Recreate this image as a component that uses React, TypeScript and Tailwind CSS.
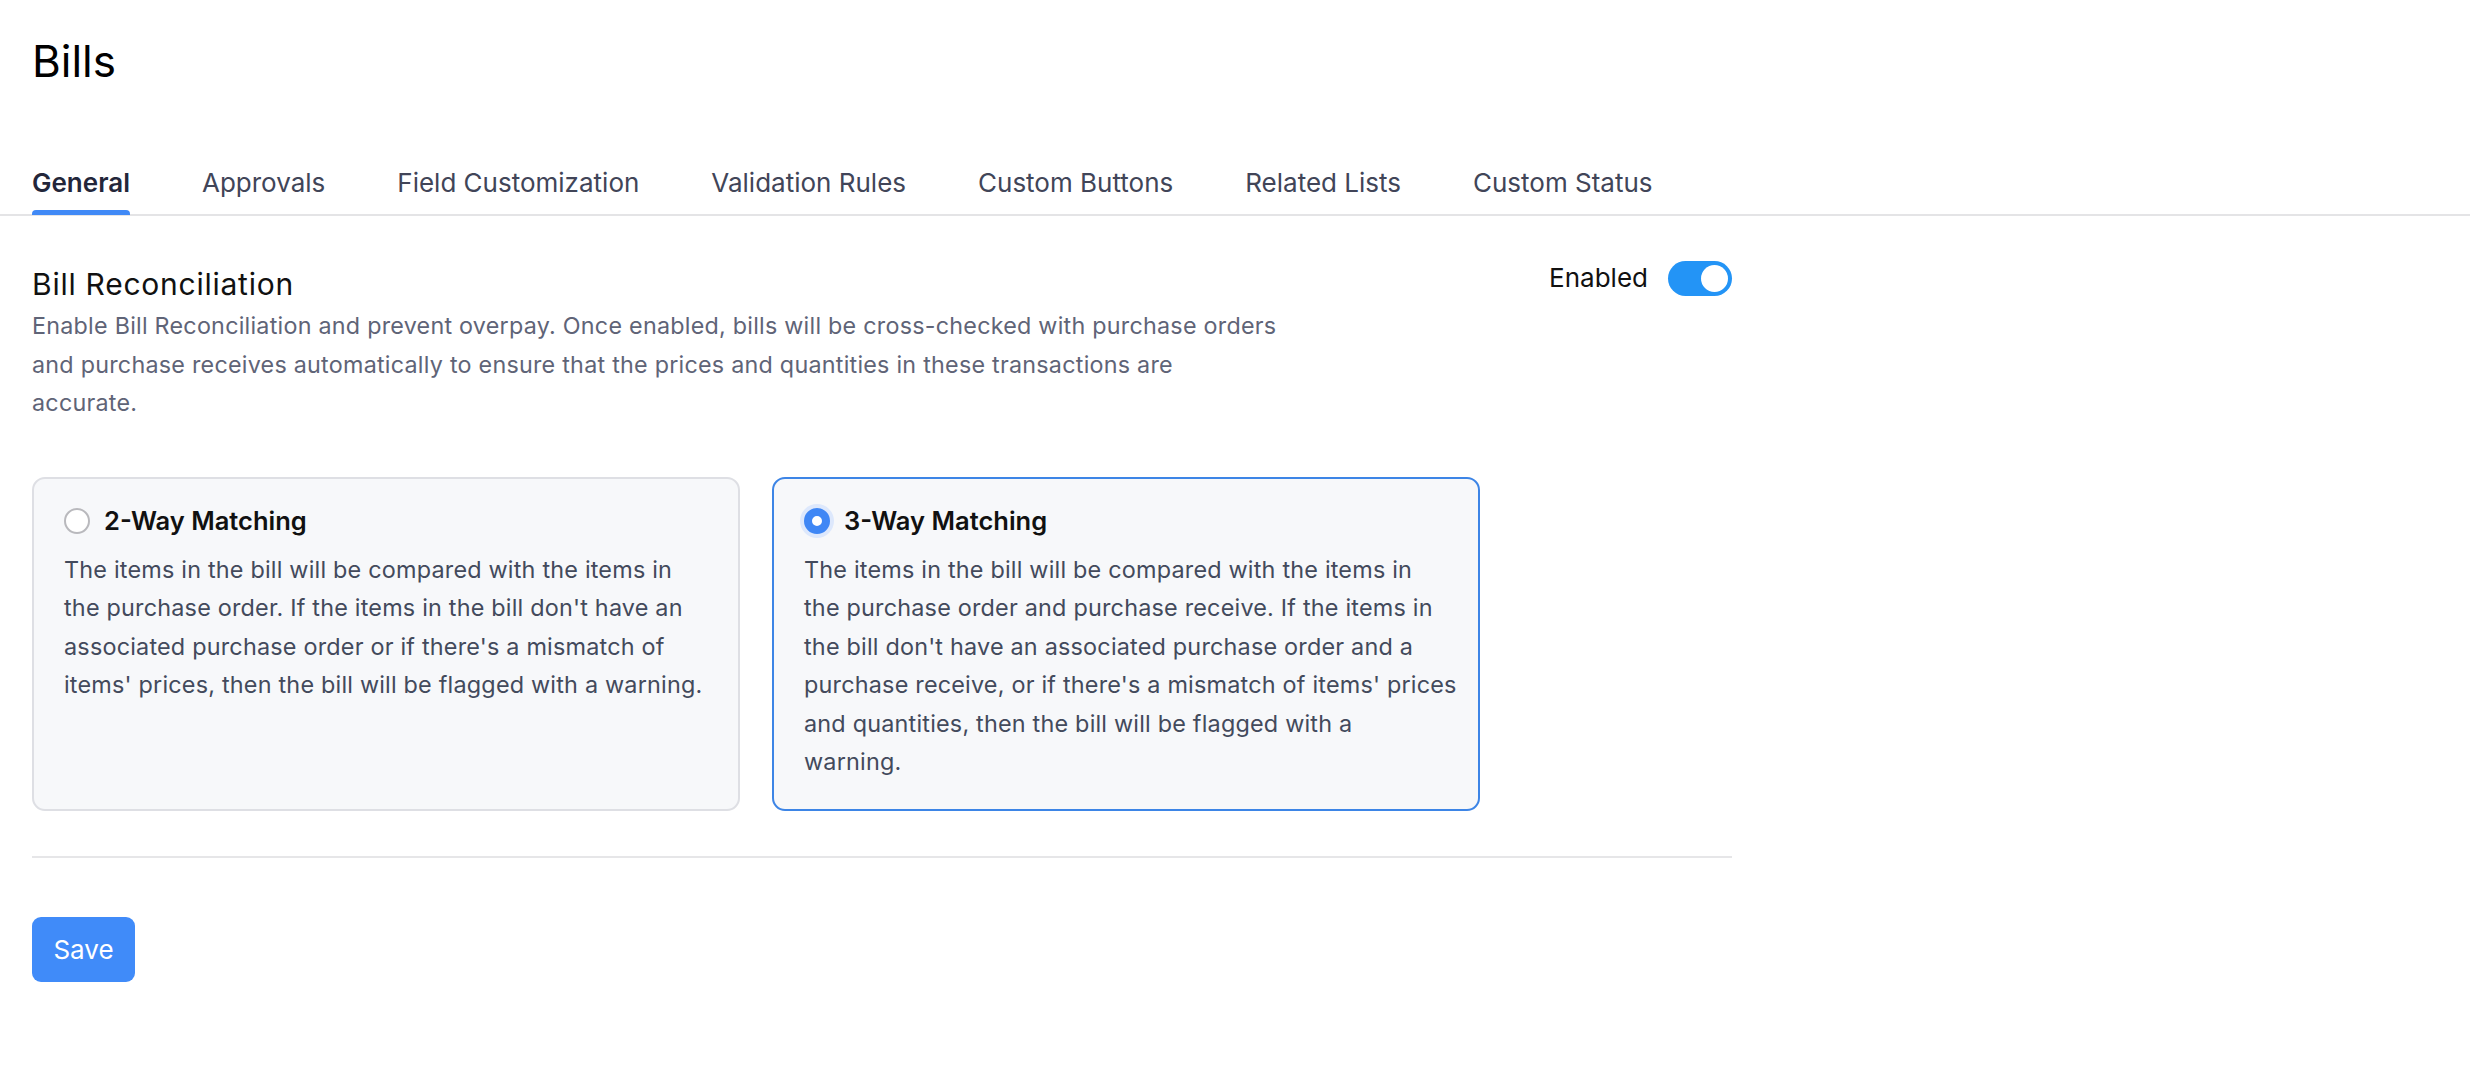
const tabs = [
  "General",
  "Approvals",
  "Field Customization",
  "Validation Rules",
  "Custom Buttons",
  "Related Lists",
  "Custom Status",
];

function Radio({ checked }: { checked: boolean }) {
  if (checked) {
    return (
      <span className="shrink-0 w-[26px] h-[26px] rounded-full border-[8px] border-[#3f87f5] bg-white ring-[4px] ring-[#dde8fc]" />
    );
  }
  return <span className="shrink-0 w-[26px] h-[26px] rounded-full border-2 border-[#b9b9bd] bg-white" />;
}

function MatchCard({ title, lines, checked }: { title: string; lines: string[]; checked: boolean }) {
  return (
    <div
      className={
        checked
          ? "w-[708px] rounded-[13px] border-2 border-[#3d85e6] bg-[#f7f8fa] pl-[30px] pr-[16px] pt-[24px] pb-[27px]"
          : "w-[708px] rounded-[13px] border-2 border-[#dedfe4] bg-[#f7f8fa] pl-[30px] pr-[16px] pt-[24px] pb-[27px]"
      }
    >
      <div className="flex items-center gap-[14px]">
        <Radio checked={checked} />
        <span className="text-[25.5px] leading-[36px] font-semibold text-[#111]">{title}</span>
      </div>
      <p className="mt-[12px] text-[23.4px] tracking-[0.2px] leading-[38.5px] text-[#434a5c] whitespace-nowrap">
        {lines.map((l, i) => (
          <span key={i}>
            {l}
            {i < lines.length - 1 && <br />}
          </span>
        ))}
      </p>
    </div>
  );
}

export default function App() {
  return (
    <div className="min-h-screen bg-white font-['Inter',sans-serif]">
      <div className="px-[32px] pt-[36px]">
        <h1 className="text-[44px] leading-[50px] text-black">Bills</h1>
      </div>

      <nav className="mt-[79px] flex gap-[72px] px-[32px] border-b-2 border-[#e4e4e6]">
        {tabs.map((t, i) => (
          <div key={t} className="relative pb-[13px]">
            <span
              className={
                i === 0
                  ? "text-[26px] leading-[36px] font-semibold text-[#23263a]"
                  : "text-[26px] leading-[36px] text-[#414558]"
              }
            >
              {t}
            </span>
            {i === 0 && <div className="absolute left-0 right-0 bottom-[-1px] h-[5px] rounded-t-[4px] bg-[#4089f6]" />}
          </div>
        ))}
      </nav>

      <div className="w-[1764px] px-[32px] pt-[43px]">
        <div className="flex justify-between items-start">
          <div className="mt-[7px]">
            <h2 className="text-[30px] tracking-[0.75px] leading-[36px] text-[#111]">Bill Reconciliation</h2>
            <p className="mt-[5px] text-[23.3px] tracking-[0.25px] leading-[38.5px] text-[#5f6477] whitespace-nowrap">
              Enable Bill Reconciliation and prevent overpay. Once enabled, bills will be cross-checked with purchase
              orders
              <br />
              and purchase receives automatically to ensure that the prices and quantities in these transactions are
              <br />
              accurate.
            </p>
          </div>
          <div className="flex items-center gap-[20px] pt-[1px]">
            <span className="text-[26px] leading-[36px] text-[#111]">Enabled</span>
            <div className="relative w-[64px] h-[35px] rounded-full bg-[#2394f6]">
              <div className="absolute right-[4px] top-[4px] w-[27px] h-[27px] rounded-full bg-white" />
            </div>
          </div>
        </div>

        <div className="mt-[54px] flex gap-[32px]">
          <MatchCard
            checked={false}
            title="2-Way Matching"
            lines={[
              "The items in the bill will be compared with the items in",
              "the purchase order. If the items in the bill don't have an",
              "associated purchase order or if there's a mismatch of",
              "items' prices, then the bill will be flagged with a warning.",
            ]}
          />
          <MatchCard
            checked={true}
            title="3-Way Matching"
            lines={[
              "The items in the bill will be compared with the items in",
              "the purchase order and purchase receive. If the items in",
              "the bill don't have an associated purchase order and a",
              "purchase receive, or if there's a mismatch of items' prices",
              "and quantities, then the bill will be flagged with a",
              "warning.",
            ]}
          />
        </div>

        <div className="mt-[45px] border-t-2 border-[#e6e6e8]" />

        <button className="mt-[59px] w-[103px] h-[65px] rounded-[9px] bg-[#408bf9] text-white text-[26px]">
          Save
        </button>
      </div>
    </div>
  );
}
